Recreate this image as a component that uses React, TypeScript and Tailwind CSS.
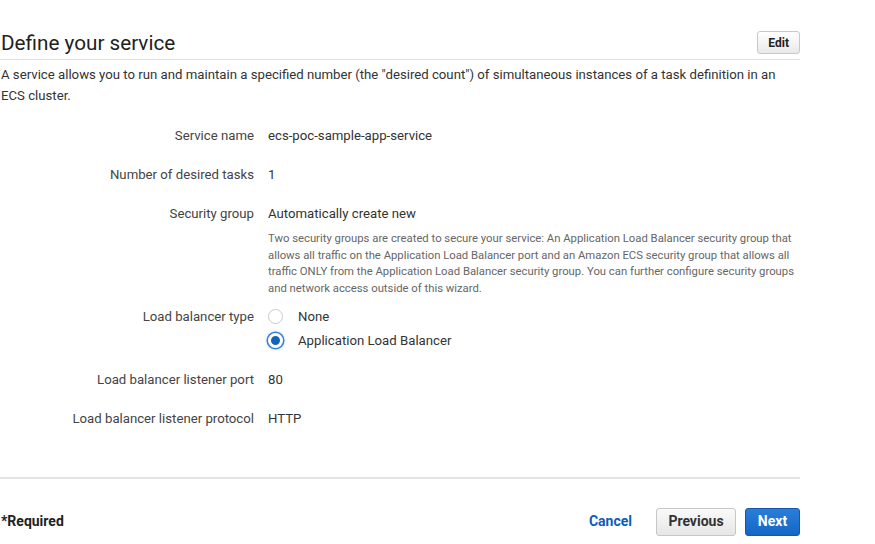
export default function App() {
  const font = { fontFamily: "Roboto, 'Liberation Sans', sans-serif" };
  return (
    <div className="w-[875px] h-[544px] bg-white text-[#444] overflow-hidden" style={font}>
      <div className="w-[800px]">
        {/* 头部 */}
        <div className="flex items-end justify-between pt-[31px] pb-[4px] border-b border-[#e2e2e2]">
          <h1 className="text-[20.7px] leading-[24px] text-[#222] pl-[1px]">Define your service</h1>
          <button className="mb-[1px] h-[23px] px-[10px] text-[12px] font-bold text-[#222] rounded-[3px] border border-[#c8c8c8] bg-gradient-to-b from-white to-[#e9e9e9]">
            Edit
          </button>
        </div>
        <p className="mt-[4px] text-[13.2px] leading-[21px] text-[#333] pl-[1px] pr-[8px]">
          A service allows you to run and maintain a specified number (the "desired count") of simultaneous instances of a task definition in an ECS cluster.
        </p>

        {/* 表单 */}
        <div className="mt-[20px] text-[13.2px] leading-[20px]">
          <Row label="Service name">ecs-poc-sample-app-service</Row>
          <Row label="Number of desired tasks" className="mt-[19px]">1</Row>
          <Row label="Security group" className="mt-[19px]">
            <div>Automatically create new</div>
            <p className="mt-[7px] text-[11.3px] leading-[16.7px] text-[#666] pr-[4px]">
              Two security groups are created to secure your service: An Application Load Balancer security group that allows all traffic on the Application Load Balancer port and an Amazon ECS security group that allows all traffic ONLY from the Application Load Balancer security group. You can further configure security groups and network access outside of this wizard.
            </p>
          </Row>
          <div className="flex mt-[7px]">
            <div className="w-[254px] text-right text-[#444] leading-[24px]">Load balancer type</div>
            <div className="pl-[14px]">
              <label className="flex items-center h-[24px]">
                <span className="w-[15px] h-[15px] rounded-full border border-[#c9c9c9] bg-white" />
                <span className="ml-[15px] text-[#333]">None</span>
              </label>
              <label className="flex items-center h-[24px]">
                <span className="w-[15px] h-[15px] rounded-full bg-[#1166bb] border-[3px] border-white ring-[1.5px] ring-[#3a7fd0] shadow-[0_0_3px_1px_rgba(60,130,220,0.5)]" />
                <span className="ml-[15px] text-[#333]">Application Load Balancer</span>
              </label>
            </div>
          </div>
          <Row label="Load balancer listener port" className="mt-[17px]">80</Row>
          <Row label="Load balancer listener protocol" className="mt-[19px]">HTTP</Row>
        </div>

        {/* 底部 */}
        <div className="mt-[48px] border-t-2 border-[#e4e4e4]" />
        <div className="flex items-center justify-between mt-[29px]">
          <span className="pl-[1px] text-[14px] font-bold text-[#222]">*Required</span>
          <div className="flex items-center">
            <button className="text-[14px] font-bold text-[#0b5dbd]">Cancel</button>
            <button className="ml-[24px] h-[28px] w-[80px] text-[14px] font-bold text-[#333] rounded-[3px] border border-[#c6c6c6] bg-gradient-to-b from-[#fafafa] to-[#e6e6e6]">
              Previous
            </button>
            <button className="ml-[9px] h-[28px] w-[55px] text-[14px] font-bold text-white rounded-[3px] border border-[#1558a8] bg-gradient-to-b from-[#2a7ed8] to-[#1466c6]">
              Next
            </button>
          </div>
        </div>
      </div>
    </div>
  );
}

function Row({
  label,
  children,
  className = "",
}: {
  label: string;
  children: React.ReactNode;
  className?: string;
}) {
  return (
    <div className={`flex ${className}`}>
      <div className="w-[254px] shrink-0 text-right text-[#444]">{label}</div>
      <div className="pl-[14px] text-[#333] flex-1">{children}</div>
    </div>
  );
}
